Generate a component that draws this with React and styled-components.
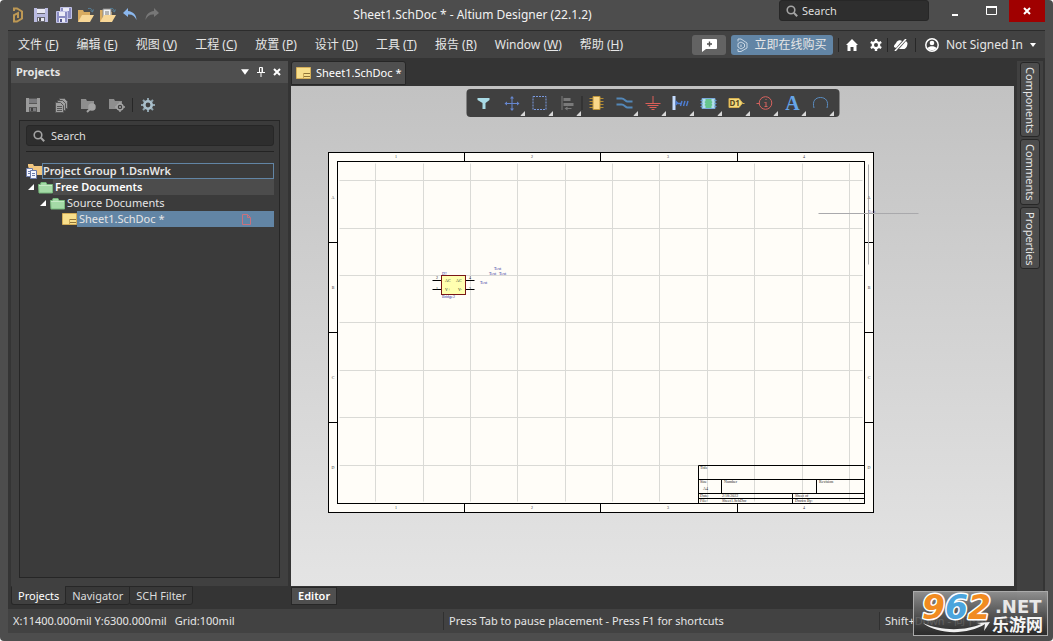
import React, { useState } from 'react';
import styled, { createGlobalStyle, css } from 'styled-components';

const GlobalStyle = createGlobalStyle`
  * { box-sizing: border-box; }
  body {
    margin: 0;
    background: #fff;
    color: #e6e6e6;
    font-family: "Noto Sans", "Noto Sans CJK SC", sans-serif;
    font-size: 11px;
    line-height: 16px;
  }
  button, input {
    font: inherit;
    color: inherit;
    padding: 0;
    border: none;
    background: none;
  }
  svg { display: block; flex: none; }
`;

const AppWindow = styled.div`
  position: relative;
  display: flex;
  flex-direction: column;
  height: 100vh;
  padding: 0 8px 8px;
  background: #4d4d4d;
  border-radius: 4px;
  overflow: hidden;
`;

const TitleBar = styled.header`
  display: flex;
  align-items: center;
  height: 31px;
  border-bottom: 1px solid #2c2c2c;
`;

const QuickAccess = styled.div`
  display: flex;
  gap: 6px;
  padding-left: 2px;
`;

const IconButton = styled.button`
  display: flex;
  align-items: center;
  justify-content: center;
  width: ${(p) => p.$width || 16}px;
  height: 20px;
`;

const WindowTitle = styled.h1`
  flex: 1;
  margin: 0;
  padding-left: 6px;
  text-align: center;
  font-size: 12px;
  font-weight: 400;
  color: #f2f2f2;
`;

const SearchBox = styled.label`
  display: flex;
  align-items: center;
  gap: ${(p) => p.$gap || 6}px;
  width: ${(p) => p.$width || 'auto'};
  height: 21px;
  padding: 0 6px;
  background: #2e2e2e;
  border: 1px solid #272727;
  border-radius: 3px;
  input {
    flex: 1;
    min-width: 0;
    outline: none;
  }
  input::placeholder { color: #dedede; opacity: 1; }
`;

const TopSearch = styled(SearchBox)`
  align-self: flex-start;
`;

const WindowControls = styled.div`
  display: flex;
  align-self: flex-start;
  align-items: center;
  margin-left: 8px;
`;

const WindowButton = styled.button`
  display: flex;
  align-items: center;
  justify-content: center;
  width: 36px;
  height: 22px;
  background: ${(p) => (p.$close ? '#a00000' : 'none')};
`;

const MenuBar = styled.nav`
  display: flex;
  align-items: center;
  height: 27px;
  padding: 0 9px 0 10px;
  background: #424242;
  font-size: 12px;
  white-space: nowrap;
`;

const MenuList = styled.div`
  display: flex;
  flex: 1;
  gap: 18px;
`;

const BarButton = styled.button`
  display: flex;
  align-items: center;
  justify-content: center;
  gap: 6px;
  width: ${(p) => p.$width}px;
  height: 20px;
  margin-right: 5px;
  border-radius: 3px;
  background: ${(p) => (p.$primary ? '#6285a5' : '#636363')};
`;

const Divider = styled.span`
  width: 1px;
  height: 14px;
  background: #272727;
`;

const AccountButton = styled.button`
  display: flex;
  align-items: center;
  gap: 7px;
  margin-left: 9px;
`;

const Workspace = styled.div`
  display: flex;
  flex: 1;
  gap: 3px;
  min-height: 0;
  padding: 0 2px 0 3px;
  background: #343434;
`;

const Dock = styled.aside`
  display: flex;
  flex-direction: column;
  width: 277px;
  padding: 3px 0 4px;
`;

const Panel = styled.section`
  display: flex;
  flex: 1;
  flex-direction: column;
  background: #404040;
`;

const PanelHeader = styled.div`
  display: flex;
  align-items: center;
  height: 22px;
  padding: 0 3px 0 5px;
  background: #4f4f4f;
  h2 {
    flex: 1;
    margin: 0;
    font-size: 11px;
    font-weight: 700;
  }
`;

const PanelTools = styled.div`
  display: flex;
  align-items: center;
  gap: 2px;
  height: 37px;
  padding: 7px 0 0 9px;
`;

const TreeBox = styled.div`
  flex: 1;
  margin: 0 8px 8px;
  padding: 4px 5px 0 6px;
  background: #3b3b3b;
  border: 1px solid #262626;
`;

const Tree = styled.div`
  margin-top: 5px;
  padding-top: 11px;
  border-top: 1px solid #232323;
`;

const TreeRow = styled.div`
  display: flex;
  align-items: center;
  height: 16px;
  padding-left: ${(p) => p.$indent}px;
`;

const Expander = styled.button`
  width: 10px;
  height: 16px;
`;

const TreeLabel = styled.span`
  display: flex;
  flex: 1;
  align-items: center;
  justify-content: space-between;
  height: 16px;
  padding: 0 23px 0 2px;
  font-weight: ${(p) => (p.$bold ? 600 : 400)};
  ${(p) => p.$tone === 'focus' && css`border: 1px solid #6285a5; padding-left: 0;`}
  ${(p) => p.$tone === 'row' && css`background: #4c4c4c; color: #fff;`}
  ${(p) => p.$tone === 'selected' && css`background: #6285a5;`}
`;

const TabStrip = styled.div`
  display: flex;
`;

const BottomTab = styled.button`
  height: 19px;
  padding: 0 6px;
  border: 1px solid #272727;
  border-top-color: ${(p) => (p.$active ? '#404040' : '#272727')};
  border-radius: 0 0 3px 3px;
  background: ${(p) => (p.$active ? '#404040' : '#383838')};
  color: ${(p) => (p.$active ? '#fff' : '#dcdcdc')};
  & + & { margin-left: -1px; }
`;

const Documents = styled.main`
  display: flex;
  flex: 1;
  flex-direction: column;
  min-width: 0;
`;

const DocTabs = styled.div`
  height: 28px;
  padding-top: 3px;
`;

const DocTab = styled.button`
  display: flex;
  align-items: center;
  gap: 5px;
  height: 24px;
  padding: 0 4px;
  border: 1px solid #262626;
  border-radius: 3px 3px 0 0;
  background: #4f4f4f;
  color: #fff;
`;

const Canvas = styled.div`
  position: relative;
  flex: 1;
  min-height: 0;
  overflow: hidden;
  background: linear-gradient(#c2c2c2, #e4e4e4);
`;

const ActiveBar = styled.div`
  position: absolute;
  top: 3px;
  left: 50%;
  transform: translateX(-50%);
  display: flex;
  align-items: center;
  height: 28px;
  padding: 0 5px 0 3px;
  border-radius: 4px;
  background: #404040;
`;

const ToolButton = styled.button`
  position: relative;
  display: flex;
  align-items: center;
  justify-content: center;
  width: 28px;
  height: 28px;
  ${(p) => p.$more && css`
    &::after {
      content: "";
      position: absolute;
      right: 0;
      bottom: 1px;
      width: 5px;
      height: 5px;
      background: #d8d8d8;
      clip-path: polygon(100% 0, 100% 100%, 0 100%);
    }
  `}
`;

const EditorTabs = styled.div`
  height: 23px;
  padding-top: 1px;
`;

const EditorTab = styled.button`
  height: 18px;
  padding: 0 6px;
  border: 1px solid #272727;
  background: #4f4f4f;
  color: #fff;
  font-weight: 600;
`;

const SideRail = styled.aside`
  display: flex;
  flex-direction: column;
  gap: 2px;
  width: 26px;
  margin-top: 3px;
  padding: 1px 3px;
  background: #404040;
`;

const SideTab = styled.button`
  width: 20px;
  padding: 4px 0 3px;
  border: 1px solid #272727;
  border-radius: 3px;
  background: #4d4d4d;
  writing-mode: vertical-rl;
`;

const StatusBar = styled.footer`
  display: flex;
  align-items: center;
  height: 24px;
  background: #424242;
  white-space: nowrap;
`;

const StatusCell = styled.div`
  display: flex;
  align-items: center;
  gap: 8px;
  flex: ${(p) => (p.$width ? 'none' : 1)};
  width: ${(p) => p.$width || 'auto'};
  height: 18px;
  padding-left: 5px;
  & + & { border-left: 1px solid #303030; }
`;

const PanelsButton = styled.button`
  width: 46px;
  height: 18px;
  border: 1px solid #303030;
  border-radius: 3px;
`;

const Watermark = styled.div`
  position: absolute;
  right: 5px;
  bottom: 5px;
`;

const LogoIcon = () => (
  <svg width="16" height="16" viewBox="0 0 16 16" fill="none" stroke="#bd9854" strokeWidth="2">
    <path d="M4 4V1.500h3l5 3v7L7 14.500H4V11" />
    <path d="M4 11V8l4-2v5" />
  </svg>
);

const SaveIcon = ({ color = '#babbe0', inner = '#4d4d4d' }) => (
  <svg width="14" height="14" viewBox="0 0 14 14">
    <path d="M0 0h14v14H0z" fill={color} />
    <path d="M3 0h8v6H3zM3 9h8v5H3z" fill={inner} opacity=".75" />
    <path d="M3 1h8v4H3zM4 10h6v3H4z" fill="#e9e9f2" opacity={inner === '#4d4d4d' ? 1 : 0.25} />
    <path d="M5 10h2v3H5z" fill={inner} />
  </svg>
);

const SaveAllIcon = () => (
  <svg width="16" height="16" viewBox="0 0 16 16">
    <path d="M4.500.5h11v11h-11z" fill="#8b8dc2" stroke="#c2c3e6" />
    <path d="M7 1h6v3H7z" fill="#ececf6" />
    <path d="M.5 4.500h11v11H.5z" fill="#8b8dc2" stroke="#c2c3e6" />
    <path d="M3 5h6v4H3zM3 11h6v4H3z" fill="#ececf6" />
    <path d="M4 12h2v3H4z" fill="#55578a" />
  </svg>
);

const OpenIcon = ({ doc }) => (
  <svg width="16" height="16" viewBox="0 0 16 16">
    <path d="M0 15V3h5l1 2h6v3" fill="#d9ab60" />
    {doc && <path d="M3 2h8v9H3z" fill="#f3f3f3" stroke="#8a8a8a" />}
    {doc && <path d="M5 5h4M5 7h4" stroke="#777" />}
    <path d="M0 15l4-7h12l-4 7z" fill="#f8d797" />
    <path d="M10 1.500c3-.5 4 .5 4.500 3M12.500 3.500l2 1.500 1-2.500" fill="none" stroke="#557d96" />
  </svg>
);

const ArrowIcon = ({ redo }) => (
  <svg width="16" height="16" viewBox="0 0 16 16">
    <path
      d={redo ? 'M10 1l5 5-5 4V7.500C6 7 3 9 1.500 13 1.500 8 5 4.500 10 4z' : 'M6 1L1 6l5 4V7.500c4-.5 7 1.500 8.500 5.500 0-5-3.500-8.500-8.500-9z'}
      fill={redo ? '#777' : '#8bb8ef'}
    />
  </svg>
);

const SearchIcon = () => (
  <svg width="12" height="12" viewBox="0 0 12 12" fill="none" stroke="#a4a4a4">
    <circle cx="5" cy="5" r="3.800" strokeWidth="1.600" />
    <path d="M7.800 7.800l3.400 3.400" strokeWidth="2" />
  </svg>
);

const CommentIcon = () => (
  <svg width="16" height="14" viewBox="0 0 16 14">
    <path d="M2 1h13a1 1 0 011 1v8a1 1 0 01-1 1H5l-4 3V2a1 1 0 011-1z" fill="#fff" />
    <path d="M6 6h5M8.500 3.500v5" stroke="#505050" strokeWidth="1.400" />
  </svg>
);

const BuyIcon = () => (
  <svg width="11" height="14" viewBox="0 0 11 14" fill="none" stroke="#cad7e3">
    <path d="M1 3.500V1h3l6 4v5l-6 3.500H1V11" />
    <path d="M1 9l3 2 3.500-2V6L4 4 1 5.500zM4 6.500V9" />
  </svg>
);

const HomeIcon = () => (
  <svg width="12" height="12" viewBox="0 0 12 12">
    <path d="M6 0l6 6h-1.500v6H7.500V8h-3v4h-3V6H0z" fill="#fff" />
  </svg>
);

const GearIcon = ({ color = '#fff', size = 12 }) => (
  <svg width={size} height={size} viewBox="0 0 12 12">
    <g stroke={color} strokeWidth="2.400">
      <path d="M6 0v12M.8 3l10.400 6M.8 9l10.400-6" />
    </g>
    <circle cx="6" cy="6" r="4.300" fill={color} />
    <circle cx="6" cy="6" r="2" fill="#424242" />
  </svg>
);

const PanelGearIcon = () => (
  <svg width="14" height="14" viewBox="0 0 14 14">
    <path d="M7 0v14M0 7h14M2 2l10 10M12 2L2 12" stroke="#8fa3ad" strokeWidth="2" />
    <circle cx="7" cy="7" r="3.700" fill="#404040" stroke="#a9bfcb" strokeWidth="2.600" />
  </svg>
);

const SyncOffIcon = () => (
  <svg width="14" height="12" viewBox="0 0 14 12">
    <path d="M0 8c0-3 2-3 2.500-5C4 1 7 1 8 2L2 9zM13.500 4c0 3-1 5-3 6H5l7-8z" fill="#fff" />
    <path d="M1 12L12 0" stroke="#fff" strokeWidth="1.500" />
  </svg>
);

const UserIcon = () => (
  <svg width="14" height="14" viewBox="0 0 14 14">
    <circle cx="7" cy="7" r="6.200" fill="none" stroke="#fff" strokeWidth="1.500" />
    <circle cx="7" cy="5" r="2.300" fill="#fff" />
    <path d="M2.500 10c2-2.500 7-2.500 9 0-2 3-7 3-9 0z" fill="#fff" />
  </svg>
);

const CaretIcon = ({ size = 6 }) => (
  <svg width={size} height={size} viewBox="0 0 6 6"><path d="M0 1h6L3 5z" fill="#fff" /></svg>
);

const PinIcon = () => (
  <svg width="8" height="10" viewBox="0 0 8 10">
    <path d="M2.500 5V.5h3V5M0 5.500h8M4 6v4" fill="none" stroke="#fff" />
    <path d="M5 1v4" stroke="#fff" />
  </svg>
);

const CloseIcon = () => (
  <svg width="8" height="8" viewBox="0 0 8 8"><path d="M1 1l6 6M7 1L1 7" stroke="#fff" strokeWidth="2" /></svg>
);

const CopyDocsIcon = () => (
  <svg width="14" height="15" viewBox="0 0 14 15" fill="#a0a0a0" stroke="#555">
    <path d="M5.500.5h5l3 3v7h-8z" />
    <path d="M3.500 2.500h5l3 3v7h-8z" />
    <path d="M1.500 4.500h5l3 3v7h-8z" />
    <path d="M3 8.500h5M3 10.500h5M3 12.500h5" />
  </svg>
);

const FolderToolIcon = ({ gear }) => (
  <svg width="16" height="15" viewBox="0 0 16 15">
    <path d="M0 1h5l1 2h7v8H0z" fill="#8e8e8e" />
    <circle cx="11" cy="9" r="3" fill={gear ? '#404040' : '#a4a4a4'} stroke="#a4a4a4" strokeWidth="1.500" />
    {gear ? <path d="M10 9h2M11 4v2M11 12v2M6 9h2M14 9h2" stroke="#a4a4a4" strokeWidth="1.400" /> : <path d="M9 11l-3 3" stroke="#a4a4a4" strokeWidth="2" />}
  </svg>
);

const FolderIcon = () => (
  <svg width="15" height="13" viewBox="0 0 15 13">
    <path d="M1 12L.5 3.500h2L3 1.500h5l1 2h5.500V12z" fill="#a4daa6" stroke="#77b87c" />
    <path d="M1 4.500h13" stroke="#c7eac6" />
  </svg>
);

const GroupIcon = () => (
  <svg width="16" height="15" viewBox="0 0 16 15">
    <path d="M2 2V0h5l1 2h8v9H5z" fill="#f1c67f" />
    <path d="M.5 4.500h6v8h-6z" fill="#f4f6ff" stroke="#6c7ba8" />
    <path d="M4.500 6.500h6v8h-6z" fill="#f4f6ff" stroke="#6c7ba8" />
    <path d="M6 9.500h3M6 11.500h3M2 7.500h2M2 9.500h2" stroke="#6c7ba8" />
  </svg>
);

const SheetIcon = () => (
  <svg width="15" height="12" viewBox="0 0 15 12">
    <path d="M.5.5h14v11H.5z" fill="#f8df8c" stroke="#d3ad58" />
    <path d="M8 6.500h6M8 9.500h6" stroke="#8f7438" />
    <path d="M7.500 6v5" stroke="#c9a758" />
  </svg>
);

const ExpandIcon = () => (
  <svg width="6" height="6" viewBox="0 0 6 6"><path d="M6 0v6H0z" fill="#fff" /></svg>
);

const ModifiedIcon = () => (
  <svg width="9" height="11" viewBox="0 0 9 11" fill="none" stroke="#c9717c">
    <path d="M.5.5h5l3 3v7h-8zM5.500.5v3h3" />
  </svg>
);

const toolShapes = {
  Filter: <path d="M2 3h12v2l-4 3v6H7V8L2 5z" fill="#a9dbe6" />,
  Move: (
    <g>
      <path d="M8.500 2v13M2 8.500h13" fill="none" stroke="#6687d0" />
      <path d="M8.500 1l2 2.500h-4zM8.500 16l2-2.500h-4zM1 8.500l2.500-2v4zM16 8.500l-2.500-2v4z" fill="#6687d0" />
    </g>
  ),
  Select: <path d="M1.500 1.500h13v13h-13z" fill="none" stroke="#7a9ae0" strokeDasharray="2 1" />,
  Align: (
    <g fill="#7a7a7a">
      <path d="M2 1h1v14H2zM4 3h7v3H4zM4 8h10v3H4z" />
      <path d="M5 13.500l3-2v1.500h4v1H8v1.500z" />
    </g>
  ),
  Part: (
    <g>
      <path d="M1 3.500h14M1 6.500h14M1 9.500h14M1 12.500h14" stroke="#b48c34" />
      <path d="M4.500 1.500h7v13h-7z" fill="#fad88a" stroke="#bf963c" />
    </g>
  ),
  Wire: <path d="M0 3.500h5c3 0 4 3 6 3h5M0 9.500h5c3 0 4 3 6 3h5" fill="none" stroke="#5387b8" strokeWidth="2" />,
  Power: <path d="M8.500 1v7M1 8.500h15M3 10.500h11M5 12.500h7M7 14.500h3" fill="none" stroke="#dd5f59" />,
  Harness: (
    <g>
      <path d="M0 1h3v14H0z" fill="#c5dcff" />
      <path d="M3 5l3 3-3 3z" fill="#4e7ed5" />
      <path d="M5 8.500h4M8 11l1.500-5M11 11l1.500-5M14 11l1.500-5" stroke="#4e7ed5" strokeWidth="1.400" />
    </g>
  ),
  'Sheet Symbol': (
    <g>
      <path d="M1.500 3.500h13v10h-13z" fill="#65c58e" stroke="#7aa9dd" />
      <path d="M2 4h3v2l-1 1 1 1.500L4 10l1 1v2H2zM14 4h-3v2l1 1-1 1.500 1 1.500-1 1v2h3z" fill="#b5dcf0" />
      <path d="M0 5.500h2M0 8.500h2M0 11.500h2M14 5.500h2M14 8.500h2M14 11.500h2" stroke="#6495d6" />
    </g>
  ),
  Port: (
    <g>
      <path d="M.5 3.500h10L14 8l-3.500 4.500H.5z" fill="#f5da7b" stroke="#d5af50" />
      <path d="M14 8.500h2" stroke="#d5af50" />
      <text x="1" y="11" fontSize="8" fontWeight="700" fill="#57471e">D1</text>
    </g>
  ),
  Directive: (
    <g fill="none" stroke="#d5625e">
      <circle cx="9" cy="8" r="6.300" />
      <path d="M0 8.500h3M9.500 7v5M8 7.500h1M8 11.500h3" />
      <path d="M9 4.500h1" />
    </g>
  ),
  Text: <text x="8" y="15" textAnchor="middle" fontFamily="Liberation Serif, serif" fontSize="20" fontWeight="700" fill="#66a5e8">A</text>,
  Arc: <path d="M1.500 13C-.5 6 3 2.500 8 2.500S16.500 6 14.500 13" fill="none" stroke="#5a8dc2" />,
};

const ToolIcon = ({ name }) => (
  <svg width="16" height="16" viewBox="0 0 16 16" overflow="visible">{toolShapes[name]}</svg>
);

const Schematic = () => {
  const vertical = [84, 132, 179, 226, 274, 321, 368, 416, 463, 511, 558];
  const horizontal = [94, 142, 189, 236, 284, 331, 379];
  const zonesX = [105, 241, 377, 513];
  const zonesY = [113, 203, 293, 383];
  return (
    <svg width="723" height="500" viewBox="0 0 723 500" fontFamily="Liberation Serif, serif" fontSize="4">
      <g transform="translate(.5 .5)" fill="none" stroke="#000">
        <rect x="37" y="66" width="545" height="360" fill="#fffdf8" />
        <g stroke="#dadad6">
          {vertical.map((x) => <path key={x} d={`M${x} 77V415`} />)}
          {horizontal.map((y) => <path key={y} d={`M48 ${y}H571`} />)}
        </g>
        <rect x="46" y="75" width="527" height="342" />
        {[173, 309, 446].map((x) => <path key={x} d={`M${x} 66v9M${x} 417v9`} />)}
        {[156, 246, 336].map((y) => <path key={y} d={`M37 ${y}h9M573 ${y}h9`} />)}
        <path d="M407 417V379H573M407 393H573M407 407H573M407 412H573M430 393v14M525 393v14M501 407v10" />
        <path d="M527 127h100M577 78v100" stroke="#a9a9ac" />
        <path d="M141 194h42M141 203h42" />
        <rect x="150" y="189" width="24" height="19" fill="#ffffb0" stroke="#7a1717" />
      </g>
      <g fill="#333" textAnchor="middle">
        {zonesX.map((x, i) => (
          <g key={x}>
            <text x={x} y="72">{i + 1}</text>
            <text x={x} y="423">{i + 1}</text>
          </g>
        ))}
        {zonesY.map((y, i) => (
          <g key={y}>
            <text x="42" y={y}>{'ABCD'[i]}</text>
            <text x="578" y={y}>{'ABCD'[i]}</text>
          </g>
        ))}
      </g>
      <g fill="#222">
        <text x="409" y="383">Title</text>
        <text x="409" y="397">Size</text>
        <text x="412" y="404">A4</text>
        <text x="433" y="397">Number</text>
        <text x="528" y="397">Revision</text>
        <text x="409" y="411">Date:</text>
        <text x="431" y="411">2/18/2022</text>
        <text x="504" y="411">Sheet  of</text>
        <text x="409" y="416">File:</text>
        <text x="431" y="416">Sheet1.SchDoc</text>
        <text x="504" y="416">Drawn By:</text>
        <text x="154" y="196">AC</text>
        <text x="165" y="196">AC</text>
        <text x="154" y="205">V+</text>
        <text x="167" y="205">V-</text>
        <text x="145" y="193">2</text>
        <text x="145" y="204">1</text>
        <text x="178" y="193">4</text>
        <text x="178" y="204">3</text>
      </g>
      <g fill="#2b2b96">
        <text x="151" y="189">D?</text>
        <text x="151" y="212">Bridge2</text>
        <text x="203" y="184">Text</text>
        <text x="198" y="189">Text</text>
        <text x="208" y="189">Text</text>
        <text x="189" y="198">Text</text>
        <text x="577" y="127" opacity=".6">Text</text>
      </g>
    </svg>
  );
};

const menus = [
  ['文件', 'F'], ['编辑', 'E'], ['视图', 'V'], ['工程', 'C'], ['放置', 'P'],
  ['设计', 'D'], ['工具', 'T'], ['报告', 'R'], ['Window', 'W'], ['帮助', 'H'],
];

const App = () => {
  const [tab, setTab] = useState('Projects');
  const [query, setQuery] = useState('');

  return (
    <>
      <GlobalStyle />
      <AppWindow>
        <TitleBar>
          <QuickAccess>
            <IconButton aria-label="Altium"><LogoIcon /></IconButton>
            <IconButton $width={18} aria-label="Save"><SaveIcon /></IconButton>
            <IconButton aria-label="Save all"><SaveAllIcon /></IconButton>
            <IconButton aria-label="Open"><OpenIcon /></IconButton>
            <IconButton aria-label="Open project"><OpenIcon doc /></IconButton>
            <IconButton aria-label="Undo"><ArrowIcon /></IconButton>
            <IconButton aria-label="Redo"><ArrowIcon redo /></IconButton>
          </QuickAccess>
          <WindowTitle>Sheet1.SchDoc * - Altium Designer (22.1.2)</WindowTitle>
          <TopSearch $width="150px" $gap={4}>
            <SearchIcon />
            <input aria-label="Search everywhere" placeholder="Search" />
          </TopSearch>
          <WindowControls>
            <WindowButton aria-label="Minimize">
              <svg width="12" height="12"><path d="M3 9h6v2H3z" fill="#fff" /></svg>
            </WindowButton>
            <WindowButton aria-label="Maximize">
              <svg width="11" height="10"><path d="M.5 1h10v7.500H.5z" fill="none" stroke="#fff" /><path d="M0 1h11" stroke="#fff" strokeWidth="2" /></svg>
            </WindowButton>
            <WindowButton $close aria-label="Close"><CloseIcon /></WindowButton>
          </WindowControls>
        </TitleBar>

        <MenuBar>
          <MenuList>
            {menus.map(([name, key]) => (
              <button key={key}>{name} (<u>{key}</u>)</button>
            ))}
          </MenuList>
          <BarButton $width={34} aria-label="Comment"><CommentIcon /></BarButton>
          <BarButton $width={102} $primary><BuyIcon />立即在线购买</BarButton>
          <Divider />
          <IconButton $width={26} aria-label="Home"><HomeIcon /></IconButton>
          <IconButton $width={22} aria-label="Settings"><GearIcon /></IconButton>
          <Divider />
          <IconButton $width={27} aria-label="Offline"><SyncOffIcon /></IconButton>
          <Divider />
          <AccountButton><UserIcon />Not Signed In<CaretIcon /></AccountButton>
        </MenuBar>

        <Workspace>
          <Dock>
            <Panel>
              <PanelHeader>
                <h2>Projects</h2>
                <IconButton aria-label="Panel menu"><CaretIcon size={8} /></IconButton>
                <IconButton aria-label="Pin"><PinIcon /></IconButton>
                <IconButton aria-label="Close panel"><CloseIcon /></IconButton>
              </PanelHeader>
              <PanelTools>
                <IconButton $width={26} aria-label="Save document"><SaveIcon color="#9b9b9b" inner="#404040" /></IconButton>
                <IconButton $width={26} aria-label="Copy"><CopyDocsIcon /></IconButton>
                <IconButton $width={26} aria-label="Explore"><FolderToolIcon /></IconButton>
                <IconButton $width={26} aria-label="Project options"><FolderToolIcon gear /></IconButton>
                <Divider />
                <IconButton $width={26} aria-label="Panel settings"><PanelGearIcon /></IconButton>
              </PanelTools>
              <TreeBox>
                <SearchBox>
                  <SearchIcon />
                  <input
                    aria-label="Search projects"
                    placeholder="Search"
                    value={query}
                    onChange={(e) => setQuery(e.target.value)}
                  />
                </SearchBox>
                <Tree>
                  <TreeRow $indent={0}>
                    <GroupIcon />
                    <TreeLabel $bold $tone="focus">Project Group 1.DsnWrk</TreeLabel>
                  </TreeRow>
                  <TreeRow $indent={2}>
                    <Expander aria-label="Collapse"><ExpandIcon /></Expander>
                    <FolderIcon />
                    <TreeLabel $bold $tone="row">Free Documents</TreeLabel>
                  </TreeRow>
                  <TreeRow $indent={14}>
                    <Expander aria-label="Collapse"><ExpandIcon /></Expander>
                    <FolderIcon />
                    <TreeLabel>Source Documents</TreeLabel>
                  </TreeRow>
                  <TreeRow $indent={36}>
                    <SheetIcon />
                    <TreeLabel $tone="selected">Sheet1.SchDoc *<ModifiedIcon /></TreeLabel>
                  </TreeRow>
                </Tree>
              </TreeBox>
            </Panel>
            <TabStrip>
              {['Projects', 'Navigator', 'SCH Filter'].map((name) => (
                <BottomTab key={name} $active={tab === name} onClick={() => setTab(name)}>{name}</BottomTab>
              ))}
            </TabStrip>
          </Dock>

          <Documents>
            <DocTabs>
              <DocTab><SheetIcon />Sheet1.SchDoc *</DocTab>
            </DocTabs>
            <Canvas>
              <Schematic />
              <ActiveBar>
                {Object.keys(toolShapes).map((name) => (
                  <React.Fragment key={name}>
                    {name === 'Part' && <Divider />}
                    <ToolButton aria-label={name} $more={name !== 'Filter' && name !== 'Part'}>
                      <ToolIcon name={name} />
                    </ToolButton>
                  </React.Fragment>
                ))}
              </ActiveBar>
            </Canvas>
            <EditorTabs>
              <EditorTab>Editor</EditorTab>
            </EditorTabs>
          </Documents>

          <SideRail>
            {['Components', 'Comments', 'Properties'].map((name) => <SideTab key={name}>{name}</SideTab>)}
          </SideRail>
        </Workspace>

        <StatusBar>
          <StatusCell $width="435px">
            <span>X:11400.000mil Y:6300.000mil</span>
            <span>Grid:100mil</span>
          </StatusCell>
          <StatusCell>Press Tab to pause placement - Press F1 for shortcuts</StatusCell>
          <StatusCell $width="120px">Shift+Down - 向下移</StatusCell>
          <PanelsButton>Panels</PanelsButton>
        </StatusBar>

        <Watermark>
          <svg width="135" height="45" viewBox="0 0 135 45" fontFamily="DejaVu Sans, sans-serif" fontWeight="700">
            <defs>
              <linearGradient id="plate" x2="0" y2="1">
                <stop offset="0" stopColor="#999" stopOpacity=".9" />
                <stop offset=".55" stopColor="#555" stopOpacity=".85" />
                <stop offset="1" stopColor="#222" stopOpacity=".8" />
              </linearGradient>
            </defs>
            <rect x=".5" y=".5" width="134" height="44" fill="url(#plate)" stroke="#aaa" />
            <path d="M10 32c15 12 45 12 62 1l-1 7 6-9-13 1 4 1c-15 7-41 7-58-1z" fill="#f1f1f1" />
            <g fontSize="33" fontStyle="italic" stroke="#fff" strokeWidth="3" paintOrder="stroke" strokeLinejoin="round">
              <text x="9" y="28" fill="#f18b21">9</text>
              <text x="32" y="28" fill="#4ba4dc">6</text>
              <text x="55" y="28" fill="#f18b21">2</text>
            </g>
            <text x="82" y="22" fontSize="18" fill="#e8e8e8">.NET</text>
            <text x="79" y="40" fontSize="17" fill="#f5f5f5" fontFamily="Noto Sans CJK SC, sans-serif">乐游网</text>
          </svg>
        </Watermark>
      </AppWindow>
    </>
  );
};

export default App;
